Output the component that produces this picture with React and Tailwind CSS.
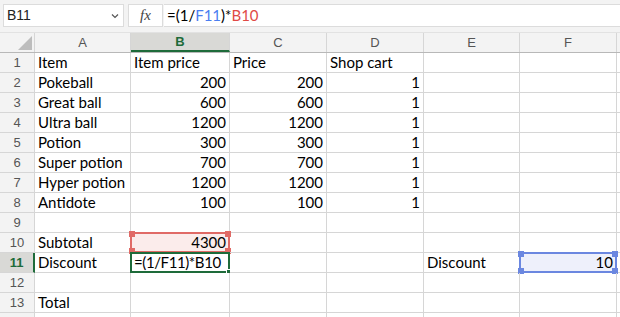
import React from 'react';

const cols = ['A', 'B', 'C', 'D', 'E', 'F'];
const widths = ['w-[96px]', 'w-[99px]', 'w-[97px]', 'w-[97px]', 'w-[96px]', 'w-[97px]'];

const rows = [
  ['Item', 'Item price', 'Price', 'Shop cart', '', ''],
  ['Pokeball', 200, 200, 1, '', ''],
  ['Great ball', 600, 600, 1, '', ''],
  ['Ultra ball', 1200, 1200, 1, '', ''],
  ['Potion', 300, 300, 1, '', ''],
  ['Super potion', 700, 700, 1, '', ''],
  ['Hyper potion', 1200, 1200, 1, '', ''],
  ['Antidote', 100, 100, 1, '', ''],
  ['', '', '', '', '', ''],
  ['Subtotal', 4300, '', '', '', ''],
  ['Discount', '=(1/F11)*B10', '', '', 'Discount', 10],
  ['', '', '', '', '', ''],
  ['Total', '', '', '', '', ''],
  ['', '', '', '', '', ''],
];

function Handle({ pos, color }) {
  return <span className={`absolute w-[6px] h-[6px] ${color} ${pos}`} />;
}

function Cell({ value, w, r, c }) {
  const isNum = typeof value === 'number';
  const red = r === 10 && c === 1;
  const green = r === 11 && c === 1;
  const blue = r === 11 && c === 5;
  return (
    <div
      className={`relative shrink-0 ${w} h-[20px] border-r border-b border-[#d6d6d6] px-[3px] flex items-center whitespace-nowrap overflow-visible ${isNum ? 'justify-end' : 'justify-start'} ${red ? 'bg-[#fbeceb]' : ''} ${blue ? 'bg-[#eef0fb]' : ''}`}
    >
      <span className={`relative z-10 ${green ? 'tracking-[-0.4px]' : ''}`}>{value}</span>
      {red && (
        <div className="absolute -left-[1px] -top-[1px] -right-[1px] -bottom-[1px] border-2 border-[#e06a66]">
          <Handle pos="-left-[3px] -top-[3px]" color="bg-[#e06a66]" />
          <Handle pos="-right-[3px] -top-[3px]" color="bg-[#e06a66]" />
          <Handle pos="-left-[3px] -bottom-[3px]" color="bg-[#e06a66]" />
          <Handle pos="-right-[3px] -bottom-[3px]" color="bg-[#e06a66]" />
        </div>
      )}
      {green && (
        <div className="absolute -left-[1px] -top-[1px] -right-[1px] -bottom-[1px] border-2 border-[#1e6b3a]">
          <span className="absolute -right-[3px] -bottom-[3px] w-[5px] h-[5px] bg-[#1e6b3a] border border-white" />
        </div>
      )}
      {blue && (
        <div className="absolute -left-[1px] -top-[1px] -right-[1px] -bottom-[1px] border-2 border-[#6b87e0]">
          <Handle pos="-left-[3px] -top-[3px]" color="bg-[#6b87e0]" />
          <Handle pos="-right-[3px] -top-[3px]" color="bg-[#6b87e0]" />
          <Handle pos="-left-[3px] -bottom-[3px]" color="bg-[#6b87e0]" />
          <Handle pos="-right-[3px] -bottom-[3px]" color="bg-[#6b87e0]" />
        </div>
      )}
    </div>
  );
}

export default function App() {
  return (
    <div className="w-[620px] h-[317px] overflow-hidden bg-white text-black" style={{ fontFamily: 'Lato, "Open Sans", sans-serif' }}>
      {/* formula bar */}
      <div className="h-[33px] bg-[#f3f3f3] flex items-start pt-[4px] border-b border-[#e2e2e2]">
        <div className="ml-[3px] w-[121px] h-[23px] bg-white border border-[#dcdcdc] flex items-center justify-between pl-[3px] pr-[4px] text-[14px] font-['Liberation_Sans',sans-serif] text-[#222]">
          <span>B11</span>
          <svg width="8" height="6" viewBox="0 0 8 6"><path d="M1 1.5 L4 4.5 L7 1.5" fill="none" stroke="#555" strokeWidth="1.2" /></svg>
        </div>
        <div className="ml-[4px] w-[35px] h-[23px] bg-white border border-[#dcdcdc] flex items-center justify-center text-[15px] italic text-[#444] font-['Liberation_Serif',serif]">
          fx
        </div>
        <div className="ml-[1px] flex-1 h-[23px] bg-white border-y border-[#dcdcdc] flex items-center pl-[3px] text-[15px]">
          <span>=(1/</span>
          <span className="text-[#4a7ef0]">F11</span>
          <span>)*</span>
          <span className="text-[#e04a46]">B10</span>
        </div>
      </div>
      {/* column headers */}
      <div className="flex h-[20px] bg-[#f3f3f3] border-b border-[#b8b8b8] font-['Liberation_Sans',sans-serif] text-[13px] text-[#555]">
        <div className="w-[35px] shrink-0 border-r border-[#d6d6d6] relative">
          <svg className="absolute right-[2px] bottom-[2px]" width="14" height="14" viewBox="0 0 14 14"><path d="M14 0 L14 14 L0 14 Z" fill="#bdbdbd" /></svg>
        </div>
        {cols.map((c, i) => (
          <div
            key={c}
            className={`${widths[i]} shrink-0 border-r border-[#d6d6d6] flex items-center justify-center ${c === 'B' ? 'bg-[#d9d9d6] text-[#1e6b3a] font-bold border-b-2 border-b-[#1e6b3a]' : ''}`}
          >
            {c}
          </div>
        ))}
        <div className="flex-1" />
      </div>
      {/* grid */}
      {rows.map((row, ri) => {
        const r = ri + 1;
        const active = r === 11;
        return (
          <div key={r} className="flex text-[15px]">
            <div
              className={`w-[35px] h-[20px] shrink-0 border-r border-b border-[#d6d6d6] flex items-center justify-center font-['Liberation_Sans',sans-serif] text-[13px] ${active ? 'bg-[#d9d9d6] text-[#1e6b3a] font-bold border-r-2 border-r-[#1e6b3a]' : 'bg-[#f3f3f3] text-[#555]'}`}
            >
              {r < 14 ? r : ''}
            </div>
            {row.map((v, ci) => (
              <Cell key={ci} value={v} w={widths[ci]} r={r} c={ci} />
            ))}
            <div className="flex-1 h-[20px] border-b border-[#d6d6d6]" />
          </div>
        );
      })}
    </div>
  );
}
